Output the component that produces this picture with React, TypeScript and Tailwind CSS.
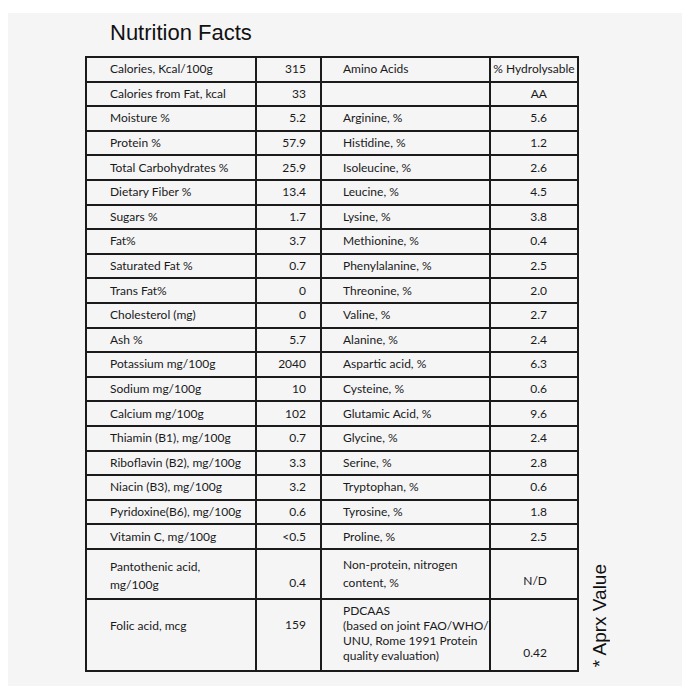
const rows: [string, string, string, string][] = [
  ["Calories, Kcal/100g", "315", "Amino Acids", "% Hydrolysable"],
  ["Calories from Fat, kcal", "33", "", "AA"],
  ["Moisture %", "5.2", "Arginine, %", "5.6"],
  ["Protein %", "57.9", "Histidine, %", "1.2"],
  ["Total Carbohydrates %", "25.9", "Isoleucine, %", "2.6"],
  ["Dietary Fiber %", "13.4", "Leucine, %", "4.5"],
  ["Sugars %", "1.7", "Lysine, %", "3.8"],
  ["Fat%", "3.7", "Methionine, %", "0.4"],
  ["Saturated Fat %", "0.7", "Phenylalanine, %", "2.5"],
  ["Trans Fat%", "0", "Threonine, %", "2.0"],
  ["Cholesterol (mg)", "0", "Valine, %", "2.7"],
  ["Ash %", "5.7", "Alanine, %", "2.4"],
  ["Potassium mg/100g", "2040", "Aspartic acid, %", "6.3"],
  ["Sodium mg/100g", "10", "Cysteine, %", "0.6"],
  ["Calcium mg/100g", "102", "Glutamic Acid, %", "9.6"],
  ["Thiamin (B1), mg/100g", "0.7", "Glycine, %", "2.4"],
  ["Riboflavin (B2), mg/100g", "3.3", "Serine, %", "2.8"],
  ["Niacin (B3), mg/100g", "3.2", "Tryptophan, %", "0.6"],
  ["Pyridoxine(B6), mg/100g", "0.6", "Tyrosine, %", "1.8"],
  ["Vitamin C, mg/100g", "<0.5", "Proline, %", "2.5"],
]

const cell = "border-r-2 border-b-2 border-[#1b1b1b]"

export default function App() {
  return (
    <div className="w-[690px] h-[700px] bg-white pt-[13px] px-[8px]">
      <div className="h-[673px] bg-[#f5f5f6] flex items-start pl-[77px] text-[#1a1a1a]">
        <div>
          <h1 className="mt-[9px] ml-[25px] text-[22px] leading-[22px] font-['Liberation_Sans',Arial,sans-serif] text-[#111]">
            Nutrition Facts
          </h1>

          <div className="mt-[12px] grid grid-cols-[170px_65px_169px_88px] border-l-2 border-t-2 border-[#1b1b1b] font-['Lato',sans-serif] text-[12px]">
            {rows.map((r, i) => (
              <div key={i} className="contents">
                <div className={`${cell} h-[24.6px] flex items-center pl-[23px]`}>{r[0]}</div>
                <div className={`${cell} h-[24.6px] flex items-center justify-end pr-[14px]`}>{r[1]}</div>
                <div className={`${cell} h-[24.6px] flex items-center pl-[21px]`}>{r[2]}</div>
                <div className={`${cell} h-[24.6px] flex items-center ${i === 0 ? "justify-center" : "justify-end pr-[30px]"}`}>
                  {r[3]}
                </div>
              </div>
            ))}

            <div className={`${cell} h-[50px] pl-[23px] pt-[8px] leading-[18px]`}>
              Pantothenic acid,<br />mg/100g
            </div>
            <div className={`${cell} h-[50px] flex items-end justify-end pr-[14px] pb-[6px]`}>0.4</div>
            <div className={`${cell} h-[50px] pl-[21px] pt-[6px] leading-[18px]`}>
              Non-protein, nitrogen<br />content, %
            </div>
            <div className={`${cell} h-[50px] flex items-end justify-end pr-[30px] pb-[8px]`}>N/D</div>

            <div className={`${cell} h-[72px] pl-[23px] pt-[17px]`}>Folic acid, mcg</div>
            <div className={`${cell} h-[72px] flex justify-end pr-[14px] pt-[16px]`}>159</div>
            <div className={`${cell} h-[72px] pl-[21px] pt-[3px] leading-[15px]`}>
              PDCAAS<br />(based on joint FAO/WHO/<br />UNU, Rome 1991 Protein<br />quality evaluation)
            </div>
            <div className={`${cell} h-[72px] flex items-end justify-end pr-[30px] pb-[8px]`}>0.42</div>
          </div>
        </div>

        <div className="self-end mb-[19px] ml-[11px] [writing-mode:vertical-rl] rotate-180 text-[19px] leading-[19px] font-['Liberation_Sans',Arial,sans-serif] text-[#111]">
          * Aprx Value
        </div>
      </div>
    </div>
  )
}
